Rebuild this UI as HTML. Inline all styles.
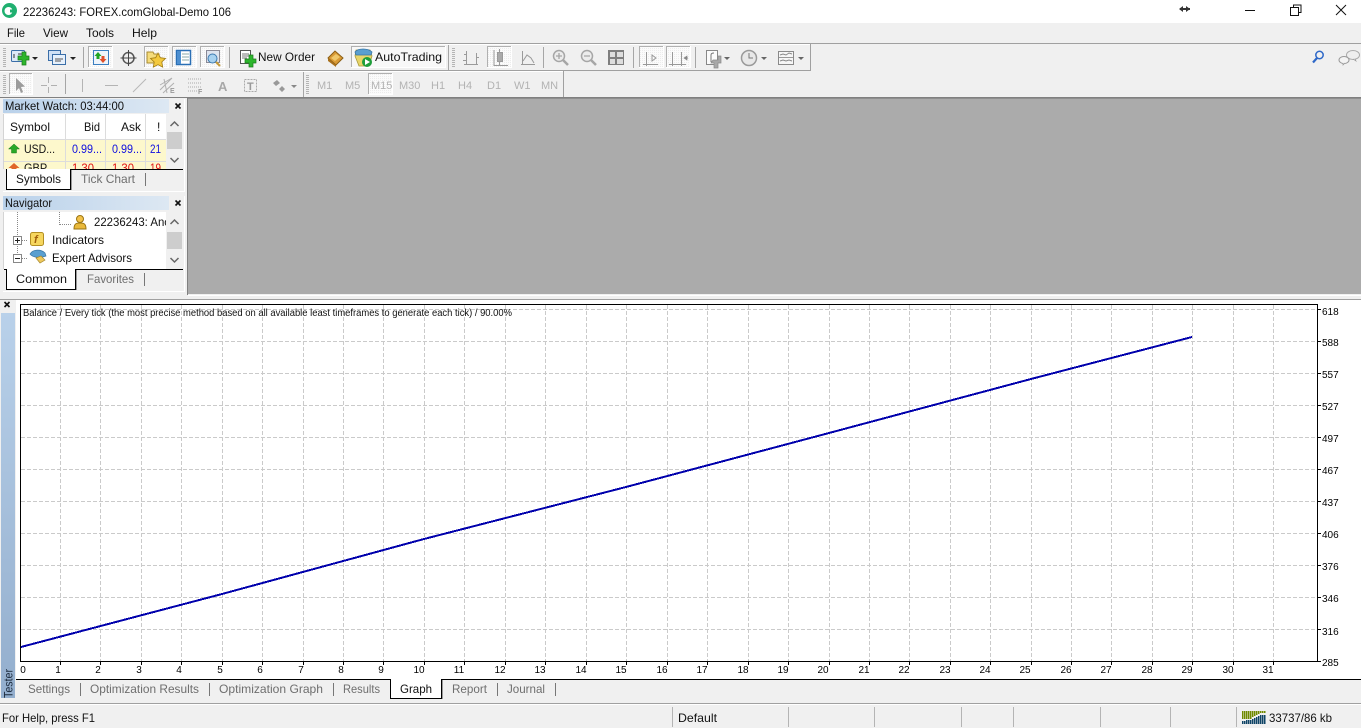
<!DOCTYPE html>
<html><head><meta charset="utf-8"><title>MT4 Tester</title>
<style>
html,body{margin:0;padding:0;background:#f0f0f0;width:1361px;height:728px;overflow:hidden}
svg{display:block;font-family:"Liberation Sans",sans-serif}
text{font-size:12px;fill:#111}
.c{shape-rendering:crispEdges}
.t{fill:#6e6e6e}
.tf{fill:#b2b2b2;font-size:11px}
.ax{font-size:10px;fill:#000;text-anchor:middle}
.ay{font-size:10px;fill:#000}
</style></head><body>
<svg width="1361" height="728" viewBox="0 0 1361 728" xmlns="http://www.w3.org/2000/svg">
<defs>
<linearGradient id="hd" x1="0" x2="1" y1="0" y2="0"><stop offset="0" stop-color="#b9d1ea"/><stop offset="1" stop-color="#dde8f3"/></linearGradient>
<linearGradient id="ts" x1="0" x2="0" y1="0" y2="1"><stop offset="0" stop-color="#b9d1ea"/><stop offset="1" stop-color="#93aecd"/></linearGradient>
<pattern id="ht" width="2" height="2" patternUnits="userSpaceOnUse"><rect width="2" height="2" fill="#fbfbfb"/><rect width="1" height="1" fill="#ececec"/></pattern>
<clipPath id="mw"><rect x="4" y="114" width="162" height="55"/></clipPath>
<clipPath id="nv"><rect x="4" y="212" width="162" height="57"/></clipPath>
</defs>

<!-- base -->
<rect class="c" width="1361" height="728" fill="#f0f0f0"/>
<rect class="c" width="1361" height="23" fill="#fff"/>

<!-- title bar -->
<circle cx="9.500" cy="10.500" r="7.500" fill="#20b070"/><circle cx="8.500" cy="11" r="4" fill="#fff"/><rect x="10" y="9.500" width="4" height="3" fill="#20b070"/>
<text x="23" y="16" textLength="208" lengthAdjust="spacingAndGlyphs">22236243: FOREX.comGlobal-Demo 106</text>
<path d="M1180 9h10" stroke="#333" stroke-width="2"/><path d="M1183 6l-4 3 4 3zM1186 6l4 3-4 3z" fill="#333"/>
<path class="c" d="M1245 10.500h10" stroke="#111"/>
<rect class="c" x="1290.500" y="7.500" width="8" height="8" fill="#fff" stroke="#111"/><path class="c" d="M1293.500 7.500v-2.500h7.500v7.500h-2.500" fill="none" stroke="#111"/>
<path d="M1336 5l10 10M1346 5l-10 10" stroke="#111" fill="none"/>

<!-- menu -->
<text x="7" y="37" textLength="18" lengthAdjust="spacingAndGlyphs">File</text>
<text x="43" y="37" textLength="25" lengthAdjust="spacingAndGlyphs">View</text>
<text x="86" y="37" textLength="28" lengthAdjust="spacingAndGlyphs">Tools</text>
<text x="132" y="37" textLength="25" lengthAdjust="spacingAndGlyphs">Help</text>

<!-- toolbar lines -->
<g class="c">
<rect y="43" width="1361" height="1" fill="#a0a0a0"/>
<rect y="44" width="810" height="1" fill="#fff"/>
<rect y="70" width="810" height="1" fill="#a0a0a0"/>
<rect x="810" y="44" width="1" height="27" fill="#a0a0a0"/>
<rect y="71" width="563" height="1" fill="#fff"/>
<rect x="563" y="71" width="1" height="26" fill="#a0a0a0"/>
<rect y="97" width="1361" height="1" fill="#808080"/>
<path d="M4.500 48v20M453.500 48v20M4.500 75v20M307.500 75v20" stroke="#b4b4b4" stroke-width="3" stroke-dasharray="1 1"/>
<!-- separators -->
<path d="M83.500 47v21M229.500 47v21M543.500 47v21M633.500 47v21M695.500 47v21M65.500 74v20M303.500 72v25M448.500 45v25" stroke="#a6a6a6" fill="none"/>
<!-- pressed buttons -->
<g fill="url(#ht)">
<rect x="88" y="46" width="25" height="22"/>
<rect x="144" y="46" width="25" height="22"/>
<rect x="172" y="46" width="25" height="22"/>
<rect x="200" y="46" width="25" height="22"/>
<rect x="351" y="46" width="95" height="22" fill="#f8f8f8"/>
<rect x="487" y="46" width="25" height="22"/>
<rect x="639" y="46" width="25" height="22"/>
<rect x="666" y="46" width="25" height="22"/>
<rect x="9" y="73" width="24" height="22"/>
<rect x="368" y="73" width="25" height="22"/>
</g>
<g fill="none" stroke="#b0b0b0">
<path d="M88.500 67V46.500H112M144.500 67V46.500H168M172.500 67V46.500H196M200.500 67V46.500H224M351.500 67V46.500H445M487.500 67V46.500H511M639.500 67V46.500H663M666.500 67V46.500H690M9.500 94V73.500H32M368.500 94V73.500H392"/>
</g>
<g fill="none" stroke="#fff">
<path d="M88.500 67.500H112.500V46M144.500 67.500H168.500V46M172.500 67.500H196.500V46M200.500 67.500H224.500V46M351.500 67.500H445.500V46M487.500 67.500H511.500V46M639.500 67.500H663.500V46M666.500 67.500H690.500V46M9.500 94.500H32.500V73M368.500 94.500H392.500V73"/>
</g>
</g>

<!-- new chart -->
<rect x="11.500" y="50.500" width="13" height="11" rx="1" fill="#dde9f7" stroke="#3a6ea8"/>
<path d="M14 54v4M18 54h4" stroke="#333"/>
<path d="M18 56h4v-4h4v4h3v4h-3v5h-4v-5h-4z" fill="#2cb52c" stroke="#1a7a1a" stroke-width=".7"/>
<path d="M32 57h6l-3 3z" fill="#222"/>
<!-- profiles -->
<rect x="48.500" y="50.500" width="12" height="10" fill="#cfe0f5" stroke="#3a6ea8"/>
<rect x="52.500" y="54.500" width="13" height="10" fill="#e6f0fb" stroke="#3a6ea8"/>
<path d="M55 59h8M55 61h6" stroke="#555"/>
<path d="M70 57h6l-3 3z" fill="#222"/>
<!-- market watch icon -->
<rect x="93.500" y="50.500" width="15" height="14" fill="#eef4fb" stroke="#3a7ec0"/>
<path d="M98 52l-3.500 4h2v3h3v-3h2z" fill="#21a521"/><path d="M103 63l3.500-4h-2v-3h-3v3h-2z" fill="#e0502a"/>
<!-- crosshair -->
<circle cx="128.500" cy="58" r="5.500" fill="none" stroke="#555" stroke-width="1.500"/><path d="M128.500 50v16M120.500 58h16" stroke="#444"/>
<!-- navigator -->
<path d="M147 52h6l1 2h5v9h-12z" fill="#f5dc7c" stroke="#a88a30"/>
<path d="M158 53l2.300 4.700 5.200.7-3.700 3.600.9 5.100-4.700-2.400-4.700 2.400.9-5.100-3.700-3.600 5.200-.7z" fill="#f3c93e" stroke="#a07a10" stroke-width=".8"/>
<!-- terminal -->
<rect x="176.500" y="50.500" width="14" height="14" fill="#fff" stroke="#2a6fb5" stroke-width="1.500"/><rect x="177" y="51" width="4" height="13" fill="#4d8fd0"/><path d="M182 54h7M182 57h7M182 60h7" stroke="#8aa"/>
<!-- tester -->
<rect x="206.500" y="50.500" width="13" height="12" fill="#dfe4ee" stroke="#8a8a96"/>
<circle cx="212.500" cy="58.500" r="4.500" fill="#a8d2f0" stroke="#3d7ab0"/><path d="M216 62l4 4" stroke="#c49a3a" stroke-width="2"/>
<!-- new order -->
<rect x="240.500" y="50.500" width="10" height="13" fill="#fff" stroke="#555"/><path d="M242 54h7M242 56h7M242 58h5" stroke="#777"/>
<path d="M245 59h4v-4h4v4h3v4h-3v4h-4v-4h-4z" fill="#2cb52c" stroke="#1a7a1a" stroke-width=".7"/>
<text x="258" y="61" textLength="57" lengthAdjust="spacingAndGlyphs">New Order</text>
<!-- gold -->
<path d="M328 58l7-7 8 7-7 7z" fill="#d99a35" stroke="#8a5e14"/><path d="M328 58l8 7v2l-8-6z" fill="#a8701c"/><path d="M331 58l5-4 4 3-5 4z" fill="#f0c86a"/>
<!-- autotrading -->
<path d="M356 50h14l2 6-3 10h-10l-4-10z" fill="#e8d56a" stroke="#a89a3a" stroke-width=".8"/>
<path d="M355 52c3-4 13-4 17 0l-1 3h-15z" fill="#5a9fd0" stroke="#3a76a5" stroke-width=".8"/>
<circle cx="367" cy="62" r="5" fill="#1e9e3a"/><path d="M365 59l5 3-5 3z" fill="#fff"/>
<text x="375" y="61" textLength="67" lengthAdjust="spacingAndGlyphs">AutoTrading</text>
<!-- chart type -->
<g stroke="#9a9a9a" fill="none" class="c">
<path d="M466.500 51v14M476.500 53v11M464 64.500h14M464 54.500h3M476 57.500h3M463 60.500h4"/>
<path d="M499.500 49v3M499.500 62v4M494 65.500h14M494 50v16"/><rect x="497.500" y="52.500" width="5" height="9" fill="#aaa"/>
<path d="M522.500 51v14M521 64.500h14"/>
</g>
<path d="M523 61l4-6 4 3 3 5" fill="none" stroke="#9a9a9a"/>
<!-- zoom -->
<g fill="#ececec" stroke="#a6a6a6" stroke-width="1.500"><circle cx="559" cy="56" r="5.500"/><circle cx="587" cy="56" r="5.500"/></g>
<path d="M563 60l5 5M591 60l5 5" stroke="#a6a6a6" stroke-width="2.500"/>
<path d="M556 56h6M559 53v6M584 56h6" stroke="#a6a6a6" stroke-width="1.300"/>
<!-- tile -->
<g class="c"><rect x="608" y="50" width="16" height="15" fill="#7e7e7e"/><rect x="610" y="52" width="5" height="5" fill="#ddd"/><rect x="617" y="52" width="6" height="5" fill="#ddd"/><rect x="610" y="59" width="5" height="5" fill="#ddd"/><rect x="617" y="59" width="6" height="5" fill="#ddd"/></g>
<!-- shift -->
<g stroke="#999" fill="none" class="c">
<path d="M646.500 52v14M643 64.500h15M672.500 52v14M681.500 52v14M669 64.500h17"/>
</g>
<path d="M652 55l4 3-4 3z" fill="none" stroke="#999"/>
<path d="M684 58h4M684 58l3-2v4z" fill="#888" stroke="#888" stroke-width=".7"/>
<!-- template -->
<rect x="706.500" y="50.500" width="11" height="14" fill="#fbfbfb" stroke="#888"/><path d="M711 62v-7q0-2 3-2" stroke="#777" fill="none"/>
<path d="M713 60h5v-4h3v4h0v3h-3v5h-4v-5h-3z" fill="#a8a8a8" stroke="#8a8a8a" stroke-width=".7"/>
<path d="M724 57h6l-3 3z" fill="#666"/>
<!-- clock -->
<circle cx="749" cy="58" r="7.500" fill="#e8e8e8" stroke="#9a9a9a" stroke-width="1.500"/><path d="M749 53v5h4" stroke="#777" fill="none"/>
<path d="M761 57h6l-3 3z" fill="#666"/>
<!-- indicators window -->
<rect class="c" x="778.500" y="51.500" width="15" height="13" fill="#f6f6f6" stroke="#8a8a8a"/><path class="c" d="M779 57.500h14" stroke="#999"/><path d="M780 55l3-1 3 1 3-2 3 1M780 61l3-1 3 1 3-1 3 1" stroke="#888" fill="none"/>
<path d="M798 57h6l-3 3z" fill="#666"/>
<!-- right icons -->
<circle cx="1319.500" cy="55" r="3.700" fill="none" stroke="#2e68c8" stroke-width="1.500"/><path d="M1317 58l-4 4.500" stroke="#2e68c8" stroke-width="2.200"/>
<ellipse cx="1353" cy="55" rx="6.500" ry="4.500" fill="#eee" stroke="#aaa"/><ellipse cx="1344" cy="60" rx="5" ry="3.500" fill="#f4f4f4" stroke="#999"/><path d="M1343 63l0 2 2-2M1355 59l1 2-3-2" fill="#ddd" stroke="#999" stroke-width=".7"/>

<!-- row 2 (disabled drawing tools) -->
<path d="M16 78v13l3-3 2 5 2-1-2-5 4-.5z" fill="#9c9c9c"/>
<path class="c" d="M48.500 77v6M48.500 87v6M41 85.500h6M51 85.500h6" stroke="#b0b0b0"/>
<g stroke="#b4b4b4" fill="none" class="c"><path d="M82.500 79v13M105 85.500h13"/></g>
<path d="M133 92l13-13" stroke="#b8b8b8" fill="none"/>
<path d="M160 90l12-12M160 85l12-7M163 93l11-10M164 79l3 14" stroke="#b0b0b0" fill="none"/>
<text x="170" y="93" style="font-size:7px;fill:#999;font-weight:bold">E</text>
<path class="c" d="M188 79h14M188 83h14M188 87h14M188 91h10" stroke="#aaa" stroke-dasharray="1 1"/>
<text x="198" y="94" style="font-size:7px;fill:#999;font-weight:bold">F</text>
<text x="218" y="91" style="font-size:13px;fill:#a8a8a8;font-weight:bold">A</text>
<rect class="c" x="244.500" y="79.500" width="12" height="12" fill="none" stroke="#aaa" stroke-dasharray="2 1"/>
<text x="247" y="90" style="font-size:11px;fill:#999;font-weight:bold">T</text>
<path d="M273 83l4-3 3 3-4 3zM279 89l3-3 3 3-3 3z" fill="#999"/>
<path d="M291 85h6l-3 3z" fill="#888"/>
<g class="tf">
<text class="tf" x="317" y="89">M1</text><text class="tf" x="345" y="89">M5</text><text class="tf" x="371" y="89">M15</text><text class="tf" x="399" y="89">M30</text><text class="tf" x="431" y="89">H1</text><text class="tf" x="458" y="89">H4</text><text class="tf" x="487" y="89">D1</text><text class="tf" x="514" y="89">W1</text><text class="tf" x="541" y="89">MN</text>
</g>

<!-- main grey workspace -->
<g class="c">
<rect x="187" y="98" width="1" height="197" fill="#808080"/>
<rect x="188" y="98" width="1173" height="196" fill="#ababab"/>
<rect x="188" y="98" width="1173" height="1" fill="#8e8e8e"/>
</g>

<!-- Market Watch -->
<rect class="c" x="3" y="99" width="166" height="14" fill="url(#hd)"/>
<text x="5" y="110" textLength="119" lengthAdjust="spacingAndGlyphs">Market Watch: 03:44:00</text>
<path d="M175.500 103.500l5 5M180.500 103.500l-5 5" stroke="#111" stroke-width="1.600"/>
<g class="c">
<rect x="3" y="114" width="163" height="55" fill="#fff"/>
<rect x="3" y="114" width="1" height="55" fill="#d4d4d4"/>
<rect x="4" y="140" width="162" height="29" fill="#fdf8cc"/>
<path d="M4 139.500h162M4 161.500h162M65.500 114v55M105.500 114v55M145.500 114v55" stroke="#dcdcdc" fill="none"/>
<rect x="167" y="114" width="16" height="55" fill="#f0f0f0"/>
<rect x="167" y="132" width="15" height="17" fill="#cdcdcd"/>
</g>
<path d="M170.500 126l4-4 4 4M170.500 158l4 4 4-4" fill="none" stroke="#666" stroke-width="1.500"/>
<text x="10" y="131" textLength="40" lengthAdjust="spacingAndGlyphs">Symbol</text>
<text x="84" y="131" textLength="16" lengthAdjust="spacingAndGlyphs">Bid</text>
<text x="121" y="131" textLength="20" lengthAdjust="spacingAndGlyphs">Ask</text>
<text x="157" y="131">!</text>
<path d="M14 144l-5.500 5h3v4h5v-4h3z" fill="#29a829" stroke="#1c7a1c" stroke-width=".5"/>
<text x="24" y="153" textLength="31" lengthAdjust="spacingAndGlyphs">USD...</text>
<text x="72" y="153" textLength="30" lengthAdjust="spacingAndGlyphs" style="fill:#1010e0">0.99...</text>
<text x="112" y="153" textLength="30" lengthAdjust="spacingAndGlyphs" style="fill:#1010e0">0.99...</text>
<text x="150" y="153" textLength="11" lengthAdjust="spacingAndGlyphs" style="fill:#1010e0">21</text>
<g clip-path="url(#mw)">
<path d="M14 163l-5.500 5h3v4h5v-4h3z" fill="#e0662a"/>
<text x="24" y="172" textLength="31" lengthAdjust="spacingAndGlyphs">GBP...</text>
<text x="72" y="172" textLength="22" lengthAdjust="spacingAndGlyphs" style="fill:#e01010">1.30</text>
<text x="112" y="172" textLength="22" lengthAdjust="spacingAndGlyphs" style="fill:#e01010">1.30</text>
<text x="150" y="172" textLength="11" lengthAdjust="spacingAndGlyphs" style="fill:#e01010">19</text>
</g>
<g class="c">
<rect x="3" y="169" width="181" height="22" fill="#f0f0f0"/>
<rect x="6" y="169" width="177" height="1" fill="#000"/>
<rect x="6.500" y="169.500" width="64" height="20" fill="#fff" stroke="#000"/>
<rect x="71" y="170" width="1" height="20" fill="#999"/>
<rect x="7" y="169" width="63" height="1" fill="#fff"/>
<rect x="145" y="173" width="1" height="13" fill="#777"/>
<rect x="184" y="99" width="1" height="93" fill="#fff"/>
<rect x="3" y="191" width="182" height="1" fill="#fff"/>
<rect x="0" y="192" width="187" height="3" fill="#f0f0f0"/>
</g>
<text x="16" y="183" textLength="45" lengthAdjust="spacingAndGlyphs">Symbols</text>
<text class="t" x="81" y="183" textLength="54" lengthAdjust="spacingAndGlyphs">Tick Chart</text>

<!-- Navigator -->
<rect class="c" x="3" y="196" width="166" height="14" fill="url(#hd)"/>
<text x="5" y="207" textLength="47" lengthAdjust="spacingAndGlyphs">Navigator</text>
<path d="M175.500 200.500l5 5M180.500 200.500l-5 5" stroke="#111" stroke-width="1.600"/>
<g class="c">
<rect x="3" y="212" width="163" height="57" fill="#fff"/>
<rect x="3" y="212" width="1" height="57" fill="#d4d4d4"/>
<rect x="167" y="212" width="16" height="57" fill="#f0f0f0"/>
<rect x="167" y="232" width="15" height="17" fill="#cdcdcd"/>
<path d="M17.500 212v45M59.500 212v13M60 224.500h11M22 240.500h6M22 258.500h6" stroke="#888" stroke-dasharray="1 1" fill="none"/>
<rect x="13.500" y="236.500" width="8" height="8" fill="#fff" stroke="#888"/>
<rect x="13.500" y="254.500" width="8" height="8" fill="#fff" stroke="#888"/>
<path d="M15 240.500h5M17.500 238v5M15 258.500h5" stroke="#222"/>
</g>
<path d="M170.500 224l4-4 4 4M170.500 258l4 4 4-4" fill="none" stroke="#666" stroke-width="1.500"/>
<circle cx="80" cy="219" r="3.500" fill="#f3c24a" stroke="#9a7412"/><path d="M74 229c0-6 3-6 6-6s6 0 6 6z" fill="#e9b93c" stroke="#9a7412"/>
<text x="94" y="226" textLength="76" lengthAdjust="spacingAndGlyphs" clip-path="url(#nv)">22236243: Anc</text>
<rect x="30.500" y="232.500" width="13" height="13" rx="2" fill="#f6d65e" stroke="#b38f22"/><text x="34" y="243" style="font-size:11px;fill:#a0600c;font-style:italic;font-weight:bold">f</text>
<text x="52" y="244" textLength="52" lengthAdjust="spacingAndGlyphs">Indicators</text>
<path d="M30 254c3-5 11-5 15-1l1 3c-5 2-13 2-16-2z" fill="#5a9fd0" stroke="#3a76a5" stroke-width=".7"/><path d="M36 258l5-2 4 4-5 3z" fill="#eec85c" stroke="#a88a30" stroke-width=".7"/>
<text x="52" y="262" textLength="80" lengthAdjust="spacingAndGlyphs">Expert Advisors</text>
<g class="c">
<rect x="3" y="269" width="181" height="22" fill="#f0f0f0"/>
<rect x="4" y="269" width="179" height="1" fill="#000"/>
<rect x="6.500" y="269.500" width="69" height="20" fill="#fff" stroke="#000"/>
<rect x="76" y="270" width="1" height="20" fill="#999"/>
<rect x="7" y="269" width="68" height="1" fill="#fff"/>
<rect x="144" y="273" width="1" height="13" fill="#777"/>
<rect x="184" y="196" width="1" height="96" fill="#fff"/>
<rect x="3" y="291" width="182" height="1" fill="#fff"/>
</g>
<text x="16" y="283" textLength="51" lengthAdjust="spacingAndGlyphs">Common</text>
<text class="t" x="87" y="283" textLength="47" lengthAdjust="spacingAndGlyphs">Favorites</text>

<!-- Tester panel -->
<g class="c">
<rect y="295" width="1361" height="4" fill="#f0f0f0"/>
<rect x="188" y="295" width="1173" height="1" fill="#fff"/>
<rect y="299" width="1361" height="1" fill="#a0a0a0"/>
<rect y="300" width="1361" height="379" fill="#fff"/>
<rect x="0" y="300" width="16" height="405" fill="#f0f0f0"/>
<rect x="1" y="313" width="14" height="385" fill="url(#ts)"/>
</g>
<path d="M4.500 302l5 5M9.500 302l-5 5" stroke="#111" stroke-width="1.600"/>
<text transform="translate(12.500 698) rotate(-90)" textLength="29" lengthAdjust="spacingAndGlyphs" style="fill:#1c2a3c">Tester</text>

<!-- chart -->
<g class="c" stroke="#cacaca" fill="none" stroke-dasharray="4 2">
<path d="M21 309.500H1317M21 341.500H1317M21 373.500H1317M21 405.500H1317M21 437.500H1317M21 469.500H1317M21 501.500H1317M21 533.500H1317M21 565.500H1317M21 597.500H1317M21 629.500H1317"/>
<path d="M60.500 305V662M100.500 305V662M141.500 305V662M181.500 305V662M222.500 305V662M262.500 305V662M303.500 305V662M343.500 305V662M383.500 305V662M424.500 305V662M464.500 305V662M505.500 305V662M545.500 305V662M586.500 305V662M626.500 305V662M667.500 305V662M707.500 305V662M748.500 305V662M788.500 305V662M829.500 305V662M869.500 305V662M909.500 305V662M950.500 305V662M990.500 305V662M1031.500 305V662M1071.500 305V662M1111.500 305V662M1152.500 305V662M1192.500 305V662M1233.500 305V662M1273.500 305V662"/>
</g>
<polyline class="c" points="21,647 222,594 424,539 626,487 829,433 1031,379 1192,337" fill="none" stroke="#0000ac" stroke-width="2"/>
<rect class="c" x="20.500" y="304.500" width="1297" height="357" fill="none" stroke="#000"/>
<g class="c" stroke="#000">
<path d="M1318 309.500h3M1318 341.500h3M1318 373.500h3M1318 405.500h3M1318 437.500h3M1318 469.500h3M1318 501.500h3M1318 533.500h3M1318 565.500h3M1318 597.500h3M1318 629.500h3M1318 661.500h3"/>
<path d="M60.500 662v3M100.500 662v3M141.500 662v3M181.500 662v3M222.500 662v3M262.500 662v3M303.500 662v3M343.500 662v3M383.500 662v3M424.500 662v3M464.500 662v3M505.500 662v3M545.500 662v3M586.500 662v3M626.500 662v3M667.500 662v3M707.500 662v3M748.500 662v3M788.500 662v3M829.500 662v3M869.500 662v3M909.500 662v3M950.500 662v3M990.500 662v3M1031.500 662v3M1071.500 662v3M1111.500 662v3M1152.500 662v3M1192.500 662v3M1233.500 662v3M1273.500 662v3"/>
</g>
<text x="23" y="316" textLength="489" lengthAdjust="spacingAndGlyphs" style="font-size:10px">Balance / Every tick (the most precise method based on all available least timeframes to generate each tick) / 90.00%</text>
<g>
<text class="ay" x="1322" y="315">618</text><text class="ay" x="1322" y="346">588</text><text class="ay" x="1322" y="378">557</text><text class="ay" x="1322" y="410">527</text><text class="ay" x="1322" y="442">497</text><text class="ay" x="1322" y="474">467</text><text class="ay" x="1322" y="506">437</text><text class="ay" x="1322" y="538">406</text><text class="ay" x="1322" y="570">376</text><text class="ay" x="1322" y="602">346</text><text class="ay" x="1322" y="635">316</text><text class="ay" x="1322" y="666">285</text>
</g>
<g>
<text class="ax" x="23" y="673">0</text><text class="ax" x="58" y="673">1</text><text class="ax" x="98" y="673">2</text><text class="ax" x="139" y="673">3</text><text class="ax" x="179" y="673">4</text><text class="ax" x="220" y="673">5</text><text class="ax" x="260" y="673">6</text><text class="ax" x="301" y="673">7</text><text class="ax" x="341" y="673">8</text><text class="ax" x="381" y="673">9</text><text class="ax" x="419" y="673">10</text><text class="ax" x="459" y="673">11</text><text class="ax" x="500" y="673">12</text><text class="ax" x="540" y="673">13</text><text class="ax" x="581" y="673">14</text><text class="ax" x="621" y="673">15</text><text class="ax" x="662" y="673">16</text><text class="ax" x="702" y="673">17</text><text class="ax" x="743" y="673">18</text><text class="ax" x="783" y="673">19</text><text class="ax" x="823" y="673">20</text><text class="ax" x="864" y="673">21</text><text class="ax" x="904" y="673">22</text><text class="ax" x="945" y="673">23</text><text class="ax" x="985" y="673">24</text><text class="ax" x="1025" y="673">25</text><text class="ax" x="1066" y="673">26</text><text class="ax" x="1106" y="673">27</text><text class="ax" x="1147" y="673">28</text><text class="ax" x="1187" y="673">29</text><text class="ax" x="1228" y="673">30</text><text class="ax" x="1268" y="673">31</text>
</g>

<!-- tester tabs -->
<g class="c">
<rect x="16" y="680" width="1345" height="23" fill="#f0f0f0"/>
<rect x="16" y="679" width="1345" height="1" fill="#000"/>
<rect x="390.500" y="679.500" width="51" height="19" fill="#fff" stroke="#000"/>
<rect x="391" y="679" width="50" height="1" fill="#fff"/>
<rect x="442" y="680" width="1" height="19" fill="#999"/>
<path d="M80.500 683v13M209.500 683v13M333.500 683v13M497.500 683v13M555.500 683v13" stroke="#777"/>
<rect y="703" width="1361" height="1" fill="#a0a0a0"/>
<rect y="704" width="1361" height="1" fill="#fff"/>
</g>
<text class="t" x="28" y="693" textLength="42" lengthAdjust="spacingAndGlyphs">Settings</text>
<text class="t" x="90" y="693" textLength="109" lengthAdjust="spacingAndGlyphs">Optimization Results</text>
<text class="t" x="219" y="693" textLength="104" lengthAdjust="spacingAndGlyphs">Optimization Graph</text>
<text class="t" x="343" y="693" textLength="37" lengthAdjust="spacingAndGlyphs">Results</text>
<text x="400" y="693" textLength="32" lengthAdjust="spacingAndGlyphs">Graph</text>
<text class="t" x="452" y="693" textLength="35" lengthAdjust="spacingAndGlyphs">Report</text>
<text class="t" x="507" y="693" textLength="38" lengthAdjust="spacingAndGlyphs">Journal</text>

<!-- status bar -->
<text x="2" y="722" textLength="93" lengthAdjust="spacingAndGlyphs">For Help, press F1</text>
<text x="678" y="722" textLength="39" lengthAdjust="spacingAndGlyphs">Default</text>
<path class="c" d="M672.500 707v20M788.500 707v20M874.500 707v20M961.500 707v20M1013.500 707v20M1100.500 707v20M1170.500 707v20M1236.500 707v20" stroke="#b4b4b4"/>
<g class="c">
<path d="M1242.500 711v8M1244.500 711v8M1246.500 711v8M1248.500 711v8M1250.500 711v8M1252.500 711v6M1254.500 711v5M1256.500 711v4M1258.500 711v3M1260.500 711v2M1262.500 711v2M1264.500 711v2" stroke="#6f8a00" stroke-width="1.500"/>
<path d="M1242.500 721v3M1244.500 721v3M1246.500 720v4M1248.500 720v4M1250.500 720v4M1252.500 719v5M1254.500 718v6M1256.500 717v7M1258.500 716v8M1260.500 715v9M1262.500 715v9M1264.500 715v9" stroke="#0f4466" stroke-width="1.500"/>
</g>
<text x="1269" y="722" textLength="63" lengthAdjust="spacingAndGlyphs">33737/86 kb</text>
</svg>
</body></html>
